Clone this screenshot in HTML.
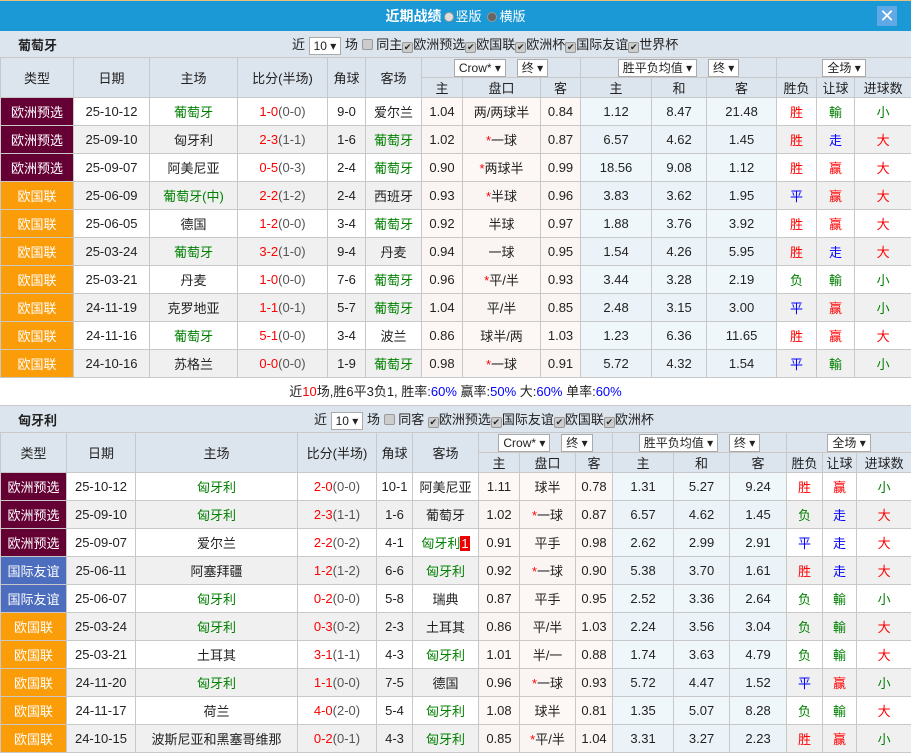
<!DOCTYPE html>
<html><head><meta charset="utf-8"><style>
*{box-sizing:border-box;margin:0;padding:0}
body{width:911px;height:754px;overflow:hidden;background:#fff;font-family:"Liberation Sans","Noto Sans CJK SC",sans-serif;font-size:13px;color:#222}
.title{height:31px;background:#1b98d6;border-top:1px solid #e8c27a;color:#fff;text-align:center;line-height:30px;font-size:14px;font-weight:bold;position:relative}
.title .r{display:inline-block;width:10px;height:10px;border-radius:50%;background:#ddd;border:1px solid #999;vertical-align:-1px;margin:0 2px}
.title small{font-size:13px;font-weight:normal}
.x{position:absolute;right:14px;top:5px;width:20px;height:20px;background:#5ea9e6;color:#fff;font-size:18px;line-height:20px;font-weight:normal}
.sh{height:26px;background:#dce4ee;position:relative;line-height:26px}
.sh b{position:absolute;left:18px;font-size:13px;top:2px}
.sh .f{position:absolute;top:1px;font-size:13px;white-space:nowrap}
.sel{display:inline-block;border:1px solid #aaa;background:#fff;height:18px;line-height:16px;padding:0 4px;font-size:12px;vertical-align:middle}
.cb{display:inline-block;width:11px;height:11px;border:1px solid #999;background:#ccc;border-radius:2px;vertical-align:-1px;font-size:9px;line-height:9px;text-align:center}
table{border-collapse:collapse;table-layout:fixed;width:911px}
td{border:1px solid #c8c8c8;text-align:center;height:28px;white-space:nowrap;overflow:hidden}
thead td{background:#dce4ee;height:20px}
thead tr.h1 td{height:20px}
.t{color:#fff}
tr.g td{background:#f0f0f0}
td.p{background:#650035!important}td.o{background:#fb9c09!important}td.b{background:#4d6dbe!important}
td.k{background:#fdf8f5!important}td.l{background:#f0f7fb!important}
tr.g td.k{background:#faf5f2!important}tr.g td.l{background:#ecf3f8!important}
.gr{color:#008000}.rd{color:#f00}.bl{color:#00f}.gy{color:#555}
.sum{height:28px;line-height:28px;text-align:center;border-bottom:1px solid #c8c8c8}
.mk{background:#e00;color:#fff;padding:0 1px}
</style></head><body>
<div class="title">近期战绩<span class="r"></span><small>竖版</small> <span class="r" style="background:#666"></span><small>横版</small><div class="x">✕</div></div>
<div class="sh"><b>葡萄牙</b><span class="f" style="left:292px">近 <span class="sel">10 ▾</span> 场 <span class="cb"></span> 同主<span class="cb">✔</span>欧洲预选<span class="cb">✔</span>欧国联<span class="cb">✔</span>欧洲杯<span class="cb">✔</span>国际友谊<span class="cb">✔</span>世界杯</span></div>
<table>
<colgroup><col style="width:73px"><col style="width:76px"><col style="width:88px"><col style="width:90px"><col style="width:38px"><col style="width:56px"><col style="width:41px"><col style="width:78px"><col style="width:40px"><col style="width:71px"><col style="width:55px"><col style="width:70px"><col style="width:40px"><col style="width:38px"><col style="width:57px"></colgroup>
<thead><tr class="h1"><td rowspan="2">类型</td><td rowspan="2">日期</td><td rowspan="2">主场</td><td rowspan="2">比分(半场)</td><td rowspan="2">角球</td><td rowspan="2">客场</td><td colspan="3"><span class="sel">Crow* ▾</span> &nbsp; <span class="sel">终 ▾</span></td><td colspan="3"><span class="sel">胜平负均值 ▾</span> &nbsp; <span class="sel">终 ▾</span></td><td colspan="3"><span class="sel">全场 ▾</span></td></tr>
<tr><td>主</td><td>盘口</td><td>客</td><td>主</td><td>和</td><td>客</td><td>胜负</td><td>让球</td><td>进球数</td></tr></thead>
<tbody>
<tr><td class="t p">欧洲预选</td><td>25-10-12</td><td class="gr">葡萄牙</td><td><span class="rd">1-0</span><span class="gy">(0-0)</span></td><td>9-0</td><td>爱尔兰</td><td class="k">1.04</td><td class="k">两/两球半</td><td class="k">0.84</td><td class="l">1.12</td><td class="l">8.47</td><td class="l">21.48</td><td class="rd">胜</td><td class="gr">輸</td><td class="gr">小</td></tr>
<tr class="g"><td class="t p">欧洲预选</td><td>25-09-10</td><td>匈牙利</td><td><span class="rd">2-3</span><span class="gy">(1-1)</span></td><td>1-6</td><td class="gr">葡萄牙</td><td class="k">1.02</td><td class="k"><span class="rd">*</span>一球</td><td class="k">0.87</td><td class="l">6.57</td><td class="l">4.62</td><td class="l">1.45</td><td class="rd">胜</td><td class="bl">走</td><td class="rd">大</td></tr>
<tr><td class="t p">欧洲预选</td><td>25-09-07</td><td>阿美尼亚</td><td><span class="rd">0-5</span><span class="gy">(0-3)</span></td><td>2-4</td><td class="gr">葡萄牙</td><td class="k">0.90</td><td class="k"><span class="rd">*</span>两球半</td><td class="k">0.99</td><td class="l">18.56</td><td class="l">9.08</td><td class="l">1.12</td><td class="rd">胜</td><td class="rd">赢</td><td class="rd">大</td></tr>
<tr class="g"><td class="t o">欧国联</td><td>25-06-09</td><td class="gr">葡萄牙(中)</td><td><span class="rd">2-2</span><span class="gy">(1-2)</span></td><td>2-4</td><td>西班牙</td><td class="k">0.93</td><td class="k"><span class="rd">*</span>半球</td><td class="k">0.96</td><td class="l">3.83</td><td class="l">3.62</td><td class="l">1.95</td><td class="bl">平</td><td class="rd">赢</td><td class="rd">大</td></tr>
<tr><td class="t o">欧国联</td><td>25-06-05</td><td>德国</td><td><span class="rd">1-2</span><span class="gy">(0-0)</span></td><td>3-4</td><td class="gr">葡萄牙</td><td class="k">0.92</td><td class="k">半球</td><td class="k">0.97</td><td class="l">1.88</td><td class="l">3.76</td><td class="l">3.92</td><td class="rd">胜</td><td class="rd">赢</td><td class="rd">大</td></tr>
<tr class="g"><td class="t o">欧国联</td><td>25-03-24</td><td class="gr">葡萄牙</td><td><span class="rd">3-2</span><span class="gy">(1-0)</span></td><td>9-4</td><td>丹麦</td><td class="k">0.94</td><td class="k">一球</td><td class="k">0.95</td><td class="l">1.54</td><td class="l">4.26</td><td class="l">5.95</td><td class="rd">胜</td><td class="bl">走</td><td class="rd">大</td></tr>
<tr><td class="t o">欧国联</td><td>25-03-21</td><td>丹麦</td><td><span class="rd">1-0</span><span class="gy">(0-0)</span></td><td>7-6</td><td class="gr">葡萄牙</td><td class="k">0.96</td><td class="k"><span class="rd">*</span>平/半</td><td class="k">0.93</td><td class="l">3.44</td><td class="l">3.28</td><td class="l">2.19</td><td class="gr">负</td><td class="gr">輸</td><td class="gr">小</td></tr>
<tr class="g"><td class="t o">欧国联</td><td>24-11-19</td><td>克罗地亚</td><td><span class="rd">1-1</span><span class="gy">(0-1)</span></td><td>5-7</td><td class="gr">葡萄牙</td><td class="k">1.04</td><td class="k">平/半</td><td class="k">0.85</td><td class="l">2.48</td><td class="l">3.15</td><td class="l">3.00</td><td class="bl">平</td><td class="rd">赢</td><td class="gr">小</td></tr>
<tr><td class="t o">欧国联</td><td>24-11-16</td><td class="gr">葡萄牙</td><td><span class="rd">5-1</span><span class="gy">(0-0)</span></td><td>3-4</td><td>波兰</td><td class="k">0.86</td><td class="k">球半/两</td><td class="k">1.03</td><td class="l">1.23</td><td class="l">6.36</td><td class="l">11.65</td><td class="rd">胜</td><td class="rd">赢</td><td class="rd">大</td></tr>
<tr class="g"><td class="t o">欧国联</td><td>24-10-16</td><td>苏格兰</td><td><span class="rd">0-0</span><span class="gy">(0-0)</span></td><td>1-9</td><td class="gr">葡萄牙</td><td class="k">0.98</td><td class="k"><span class="rd">*</span>一球</td><td class="k">0.91</td><td class="l">5.72</td><td class="l">4.32</td><td class="l">1.54</td><td class="bl">平</td><td class="gr">輸</td><td class="gr">小</td></tr>
</tbody></table>
<div class="sum">近<span class="rd">10</span>场,胜6平3负1, 胜率:<span class="bl">60%</span> 赢率:<span class="bl">50%</span> 大:<span class="bl">60%</span> 单率:<span class="bl">60%</span></div>
<div class="sh"><b>匈牙利</b><span class="f" style="left:314px">近 <span class="sel">10 ▾</span> 场 <span class="cb"></span> 同客 <span class="cb">✔</span>欧洲预选<span class="cb">✔</span>国际友谊<span class="cb">✔</span>欧国联<span class="cb">✔</span>欧洲杯</span></div>
<table>
<colgroup><col style="width:66px"><col style="width:69px"><col style="width:162px"><col style="width:79px"><col style="width:36px"><col style="width:66px"><col style="width:41px"><col style="width:56px"><col style="width:37px"><col style="width:61px"><col style="width:56px"><col style="width:57px"><col style="width:36px"><col style="width:34px"><col style="width:55px"></colgroup>
<thead><tr class="h1"><td rowspan="2">类型</td><td rowspan="2">日期</td><td rowspan="2">主场</td><td rowspan="2">比分(半场)</td><td rowspan="2">角球</td><td rowspan="2">客场</td><td colspan="3"><span class="sel">Crow* ▾</span> &nbsp; <span class="sel">终 ▾</span></td><td colspan="3"><span class="sel">胜平负均值 ▾</span> &nbsp; <span class="sel">终 ▾</span></td><td colspan="3"><span class="sel">全场 ▾</span></td></tr>
<tr><td>主</td><td>盘口</td><td>客</td><td>主</td><td>和</td><td>客</td><td>胜负</td><td>让球</td><td>进球数</td></tr></thead>
<tbody>
<tr><td class="t p">欧洲预选</td><td>25-10-12</td><td class="gr">匈牙利</td><td><span class="rd">2-0</span><span class="gy">(0-0)</span></td><td>10-1</td><td>阿美尼亚</td><td class="k">1.11</td><td class="k">球半</td><td class="k">0.78</td><td class="l">1.31</td><td class="l">5.27</td><td class="l">9.24</td><td class="rd">胜</td><td class="rd">赢</td><td class="gr">小</td></tr>
<tr class="g"><td class="t p">欧洲预选</td><td>25-09-10</td><td class="gr">匈牙利</td><td><span class="rd">2-3</span><span class="gy">(1-1)</span></td><td>1-6</td><td>葡萄牙</td><td class="k">1.02</td><td class="k"><span class="rd">*</span>一球</td><td class="k">0.87</td><td class="l">6.57</td><td class="l">4.62</td><td class="l">1.45</td><td class="gr">负</td><td class="bl">走</td><td class="rd">大</td></tr>
<tr><td class="t p">欧洲预选</td><td>25-09-07</td><td>爱尔兰</td><td><span class="rd">2-2</span><span class="gy">(0-2)</span></td><td>4-1</td><td class="gr">匈牙利<span class="mk">1</span></td><td class="k">0.91</td><td class="k">平手</td><td class="k">0.98</td><td class="l">2.62</td><td class="l">2.99</td><td class="l">2.91</td><td class="bl">平</td><td class="bl">走</td><td class="rd">大</td></tr>
<tr class="g"><td class="t b">国际友谊</td><td>25-06-11</td><td>阿塞拜疆</td><td><span class="rd">1-2</span><span class="gy">(1-2)</span></td><td>6-6</td><td class="gr">匈牙利</td><td class="k">0.92</td><td class="k"><span class="rd">*</span>一球</td><td class="k">0.90</td><td class="l">5.38</td><td class="l">3.70</td><td class="l">1.61</td><td class="rd">胜</td><td class="bl">走</td><td class="rd">大</td></tr>
<tr><td class="t b">国际友谊</td><td>25-06-07</td><td class="gr">匈牙利</td><td><span class="rd">0-2</span><span class="gy">(0-0)</span></td><td>5-8</td><td>瑞典</td><td class="k">0.87</td><td class="k">平手</td><td class="k">0.95</td><td class="l">2.52</td><td class="l">3.36</td><td class="l">2.64</td><td class="gr">负</td><td class="gr">輸</td><td class="gr">小</td></tr>
<tr class="g"><td class="t o">欧国联</td><td>25-03-24</td><td class="gr">匈牙利</td><td><span class="rd">0-3</span><span class="gy">(0-2)</span></td><td>2-3</td><td>土耳其</td><td class="k">0.86</td><td class="k">平/半</td><td class="k">1.03</td><td class="l">2.24</td><td class="l">3.56</td><td class="l">3.04</td><td class="gr">负</td><td class="gr">輸</td><td class="rd">大</td></tr>
<tr><td class="t o">欧国联</td><td>25-03-21</td><td>土耳其</td><td><span class="rd">3-1</span><span class="gy">(1-1)</span></td><td>4-3</td><td class="gr">匈牙利</td><td class="k">1.01</td><td class="k">半/一</td><td class="k">0.88</td><td class="l">1.74</td><td class="l">3.63</td><td class="l">4.79</td><td class="gr">负</td><td class="gr">輸</td><td class="rd">大</td></tr>
<tr class="g"><td class="t o">欧国联</td><td>24-11-20</td><td class="gr">匈牙利</td><td><span class="rd">1-1</span><span class="gy">(0-0)</span></td><td>7-5</td><td>德国</td><td class="k">0.96</td><td class="k"><span class="rd">*</span>一球</td><td class="k">0.93</td><td class="l">5.72</td><td class="l">4.47</td><td class="l">1.52</td><td class="bl">平</td><td class="rd">赢</td><td class="gr">小</td></tr>
<tr><td class="t o">欧国联</td><td>24-11-17</td><td>荷兰</td><td><span class="rd">4-0</span><span class="gy">(2-0)</span></td><td>5-4</td><td class="gr">匈牙利</td><td class="k">1.08</td><td class="k">球半</td><td class="k">0.81</td><td class="l">1.35</td><td class="l">5.07</td><td class="l">8.28</td><td class="gr">负</td><td class="gr">輸</td><td class="rd">大</td></tr>
<tr class="g"><td class="t o">欧国联</td><td>24-10-15</td><td>波斯尼亚和黑塞哥维那</td><td><span class="rd">0-2</span><span class="gy">(0-1)</span></td><td>4-3</td><td class="gr">匈牙利</td><td class="k">0.85</td><td class="k"><span class="rd">*</span>平/半</td><td class="k">1.04</td><td class="l">3.31</td><td class="l">3.27</td><td class="l">2.23</td><td class="rd">胜</td><td class="rd">赢</td><td class="gr">小</td></tr>
</tbody></table>
</body></html>
